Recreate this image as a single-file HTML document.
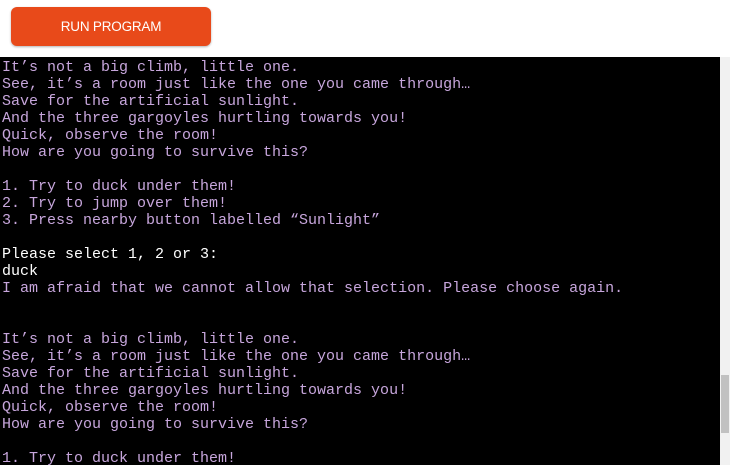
<!DOCTYPE html><html><head><style>
body{margin:0;width:730px;height:470px;background:#fff;overflow:hidden;position:relative;font-family:"Liberation Sans",sans-serif}
.btn{position:absolute;left:11px;top:7px;width:200px;height:39px;background:#e84a1a;border-radius:6px;color:#fff;font-size:13.5px;letter-spacing:-0.2px;text-align:center;line-height:40px;box-shadow:0 1px 2px rgba(0,0,0,.3)}
.term{position:absolute;left:0;top:57px;width:720px;height:408px;background:#000;overflow:hidden}
pre{margin:0;padding-left:2px;padding-top:2px;font-family:"Liberation Mono",monospace;font-size:15px;line-height:17px;color:#c7a6dc}
.w{color:#fff}
.sb{position:absolute;left:720px;top:57px;width:10px;height:408px;background:#f1f1f1}
.th{position:absolute;left:721px;top:375px;width:8px;height:58px;background:#c1c1c1}
</style></head><body>
<div class="btn">RUN PROGRAM</div>
<div class="term"><pre>It’s not a big climb, little one.
See, it’s a room just like the one you came through…
Save for the artificial sunlight.
And the three gargoyles hurtling towards you!
Quick, observe the room!
How are you going to survive this?

1. Try to duck under them!
2. Try to jump over them!
3. Press nearby button labelled “Sunlight”

<span class="w">Please select 1, 2 or 3:
duck</span>
I am afraid that we cannot allow that selection. Please choose again.


It’s not a big climb, little one.
See, it’s a room just like the one you came through…
Save for the artificial sunlight.
And the three gargoyles hurtling towards you!
Quick, observe the room!
How are you going to survive this?

1. Try to duck under them!</pre></div>
<div class="sb"></div><div class="th"></div>
</body></html>
